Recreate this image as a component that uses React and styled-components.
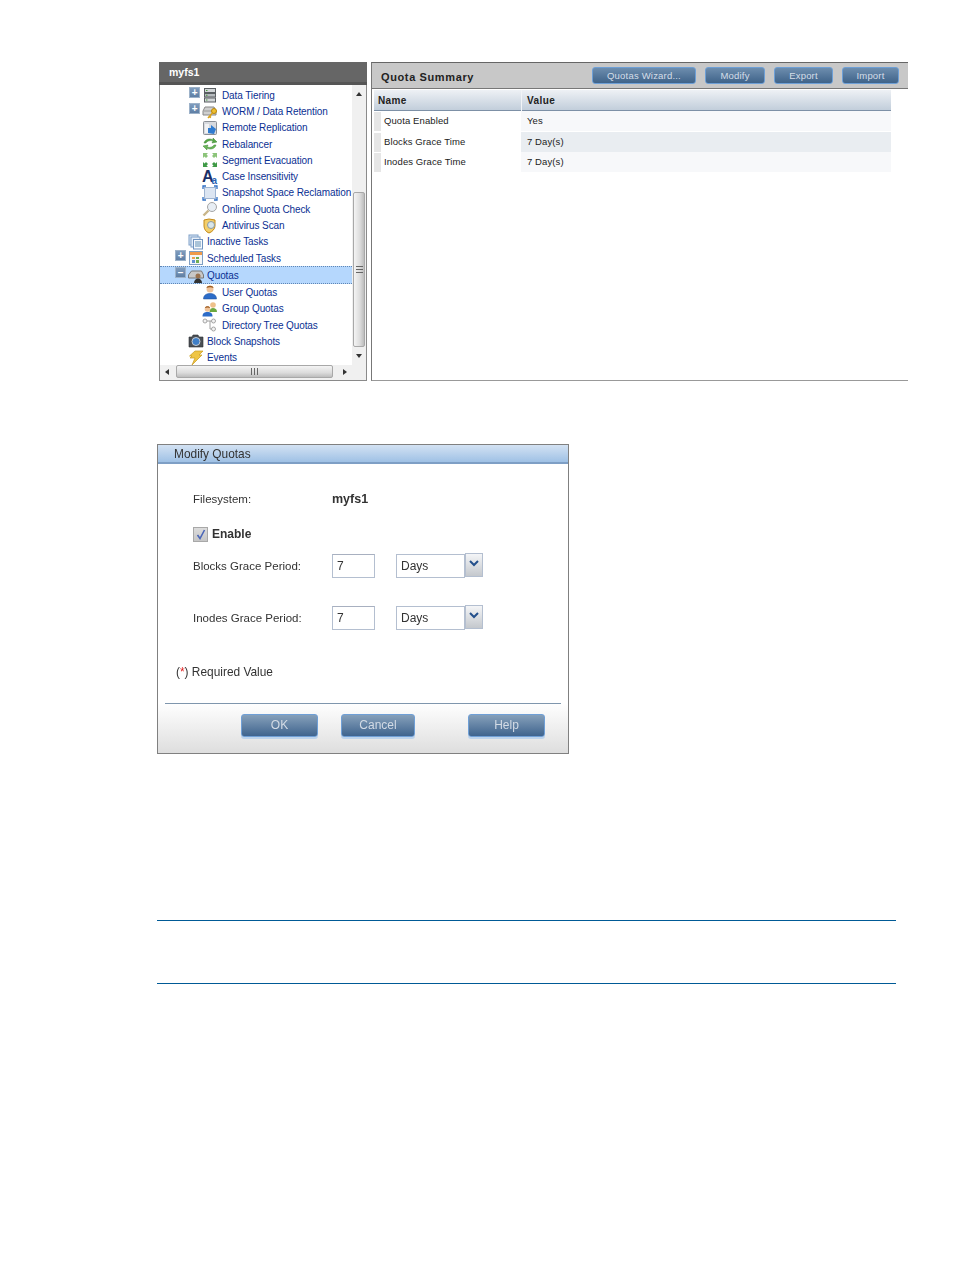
import React from 'react'
import styled, { createGlobalStyle } from 'styled-components'

const Global = createGlobalStyle`
  html, body { margin: 0; padding: 0; background: #fff; }
  body { font-family: "Liberation Sans", Arial, sans-serif; }
`

const Page = styled.div`
  width: 954px;
  height: 1270px;
  box-sizing: border-box;
  padding: 62px 0 0 157px;
  overflow: hidden;
`

const TopRow = styled.div`
  display: flex;
  gap: 4px;
  margin-left: 2px;
  height: 319px;
`

/* ---- tree ---- */
const TreePanel = styled.div`
  width: 208px;
  display: flex;
  flex-direction: column;
`
const TreeHeader = styled.div`
  height: 23px;
  box-sizing: border-box;
  background: #666;
  border-bottom: 3px solid #555;
  padding: 4px 0 0 10px;
  color: #fff;
  font-size: 10.5px;
  font-weight: bold;
  line-height: 13px;
`
const TreeBody = styled.div`
  flex: 1;
  display: grid;
  grid-template-columns: 1fr 14px;
  grid-template-rows: 280px 1fr;
  border: 1px solid #8a8a8a;
  border-top: none;
  background: #fff;
`
const TreeList = styled.div`
  padding-top: 2px;
  overflow: hidden;
`
const Row = styled.div`
  display: flex;
  align-items: center;
  box-sizing: border-box;
  height: ${p => (p.$selected ? '18px' : '16.3px')};
  padding-left: ${p => (p.$level === 2 ? 28 : 14)}px;
  color: #0a2f92;
  font-size: 10px;
  letter-spacing: -0.1px;
  white-space: nowrap;
  ${p => p.$selected && `
    background: #b5d7fd;
    border-top: 1px dotted #5f86b5;
    border-bottom: 1px dotted #5f86b5;
  `}
`
const ExpanderSlot = styled.span`
  width: 14px;
  height: 100%;
  flex: none;
  display: flex;
  align-items: center;
`
const Expander = styled.span`
  display: flex;
  align-items: center;
  justify-content: center;
  width: 9px;
  height: 9px;
  margin-left: 1px;
  background: linear-gradient(#7f9cbd, #5f7fa5);
  border: 1px solid #9db2c9;
  box-sizing: content-box;
  color: #fff;
  font-size: 10px;
  font-weight: bold;
  line-height: 9px;
  transform: translateY(-3px);
`
const Glyph = styled.svg`
  width: 16px;
  height: 16px;
  flex: none;
  overflow: visible;
  margin-right: ${p => (p.$level === 2 ? 4 : 3)}px;
`

const VScroll = styled.div`
  position: relative;
  background: #f0f0f0;
  display: flex;
  flex-direction: column;
  align-items: center;
  padding-top: 107px;
`
const VThumb = styled.div`
  width: 12px;
  height: 155px;
  box-sizing: border-box;
  background: linear-gradient(90deg, #f4f4f4, #dcdcdc 60%, #bdbdbd);
  border: 1px solid #a8a8a8;
  border-radius: 2px;
  display: flex;
  align-items: center;
  justify-content: center;
  color: #666;
`
const Arrow = styled.span`
  position: absolute;
  width: 0;
  height: 0;
  ${p => p.$dir === 'up' && `top: 7px; left: 4px; border: 3px solid transparent; border-top: 0; border-bottom: 4px solid #333;`}
  ${p => p.$dir === 'down' && `bottom: 7px; left: 4px; border: 3px solid transparent; border-bottom: 0; border-top: 4px solid #333;`}
  ${p => p.$dir === 'left' && `top: 4px; left: 5px; border: 3px solid transparent; border-left: 0; border-right: 4px solid #333;`}
  ${p => p.$dir === 'right' && `top: 4px; right: 5px; border: 3px solid transparent; border-right: 0; border-left: 4px solid #333;`}
`
const HScroll = styled.div`
  position: relative;
  background: #f0f0f0;
  padding: 0 19px 0 16px;
`
const HThumb = styled.div`
  height: 13px;
  box-sizing: border-box;
  background: linear-gradient(#f4f4f4, #dcdcdc 60%, #bdbdbd);
  border: 1px solid #a8a8a8;
  border-radius: 2px;
  display: flex;
  align-items: center;
  justify-content: center;
`
const Grip = styled.span`
  display: block;
  width: 7px;
  height: 7px;
  background: ${p => p.$vertical
    ? 'repeating-linear-gradient(#666 0 1px, transparent 1px 3px)'
    : 'repeating-linear-gradient(90deg, #666 0 1px, transparent 1px 3px)'};
`
const Corner = styled.div`
  background: #f0f0f0;
`

/* ---- summary ---- */
const SummaryPanel = styled.div`
  width: 537px;
  box-sizing: border-box;
  height: 319px;
  border-left: 1px solid #777;
  border-top: 1px solid #666;
  border-bottom: 1px solid #999;
`
const SummaryBar = styled.div`
  height: 26px;
  box-sizing: border-box;
  background: #c8c8c8;
  border-bottom: 1px solid #777;
  display: flex;
  align-items: center;
  padding: 0 9px 1px 9px;
`
const SummaryTitle = styled.div`
  flex: 1;
  font-size: 11px;
  font-weight: bold;
  letter-spacing: 0.62px;
  color: #222;
  padding-top: 3px;
`
const BarButton = styled.button`
  width: ${p => p.$w}px;
  margin-left: ${p => p.$gap}px;
  height: 17px;
  padding: 0;
  background: linear-gradient(#6d8dae, #3f6389);
  border: 1px solid #6d9fd6;
  border-radius: 3px;
  color: #d5dee8;
  font-family: inherit;
  font-size: 9.5px;
  letter-spacing: 0.2px;
`
const SummaryTable = styled.div`
  width: 517px;
  margin: 1px 0 0 2px;
`
const HeadRow = styled.div`
  display: grid;
  grid-template-columns: 147px 1fr;
  height: 21px;
  box-sizing: border-box;
  border-bottom: 1px solid #7d90a6;
  background: linear-gradient(#eef1f5, #c2cedb);
`
const HeadCell = styled.div`
  padding-left: ${p => p.$pad}px;
  font-size: 10px;
  font-weight: bold;
  letter-spacing: 0.4px;
  line-height: 22px;
  color: #222;
  & + & { border-left: 1px solid #f2f4f7; }
`
const DataRow = styled.div`
  display: grid;
  grid-template-columns: 147px 1fr;
  height: 20.5px;
  box-sizing: border-box;
  border-bottom: 1px solid #fff;
  font-size: 9.5px;
  letter-spacing: 0.1px;
  line-height: 20px;
  color: #222;
`
const LabelCell = styled.div`
  padding-left: 3px;
  background: #fff;
  border-left: 7px solid #e6e6e6;
  margin-top: 1px;
  line-height: 18px;
`
const ValueCell = styled.div`
  padding-left: 6px;
  background: ${p => (p.$alt ? '#e9edf1' : '#f7f8fa')};
`

/* ---- dialog ---- */
const Dialog = styled.div`
  margin-top: 63px;
  width: 412px;
  height: 310px;
  box-sizing: border-box;
  border: 1px solid #808080;
  display: flex;
  flex-direction: column;
  filter: blur(0.3px);
`
const DialogTitle = styled.div`
  height: 19px;
  box-sizing: border-box;
  background: linear-gradient(#d3e2f3, #9fc1e5);
  border-bottom: 2px solid #7e9fc5;
  padding-left: 16px;
  color: #333;
  font-size: 11.9px;
  line-height: 19px;
`
const DialogBody = styled.div`
  flex: 1;
  padding-left: 35px;
  font-size: 12px;
  color: #333;
`
const FieldRow = styled.div`
  display: flex;
  align-items: center;
  margin-top: ${p => p.$top}px;
  height: ${p => p.$height || 16}px;
`
const FieldLabel = styled.div`
  width: 139px;
  flex: none;
  font-size: 11.5px;
`
const BoldText = styled.span`
  font-weight: bold;
  font-size: ${p => p.$size || 12.5}px;
  color: #333;
`
const CheckBox = styled.span`
  display: flex;
  align-items: center;
  justify-content: center;
  width: 13px;
  height: 13px;
  margin-right: 4px;
  background: linear-gradient(#dcdcdc, #c6c6c6);
  border: 1px solid #a8a8a8;
`
const TextBox = styled.div`
  width: 43px;
  height: 24px;
  box-sizing: border-box;
  border: 1px solid #b4bfd0;
  border-top-color: #a8b0c0;
  padding-left: 4px;
  line-height: 22px;
  background: #fff;
`
const SelectBox = styled.div`
  display: flex;
  margin-left: 21px;
  height: 24px;
`
const SelectValue = styled.div`
  width: 69px;
  box-sizing: border-box;
  border: 1px solid #b4bfd0;
  padding-left: 4px;
  line-height: 23px;
`
const SelectButton = styled.div`
  width: 18px;
  height: 24px;
  margin-top: -1px;
  box-sizing: border-box;
  background: linear-gradient(#f4f5f7, #c4c8cd);
  border: 1px solid #b4bfd0;
  display: flex;
  justify-content: center;
  padding-top: 6px;
`
const RequiredNote = styled.div`
  margin: 34px 0 0 -17px;
  height: 16px;
  font-size: 11.9px;
  line-height: 16px;
  color: #333;
`
const Star = styled.span`
  color: #e02020;
`
const DialogFooter = styled.div`
  height: 50px;
  box-sizing: border-box;
  margin: 0 7px;
  border-top: 1px solid #7f96ad;
  padding-top: 10px;
  display: flex;
`
const FooterFill = styled.div`
  background: linear-gradient(#fff, #dedede);
`
const DialogButton = styled.button`
  width: ${p => p.$w}px;
  margin-left: ${p => p.$gap}px;
  height: 23px;
  padding: 0 0 2px;
  background: linear-gradient(#86a0ba, #3f648e);
  border: 1px solid #6f9fd6;
  border-radius: 3px;
  box-shadow: 0 2px 0 #bcd3ec;
  color: #d3dbe5;
  font-family: inherit;
  font-size: 12px;
`

const Note = styled.div`
  margin-top: 166px;
  width: 739px;
  height: 64px;
  box-sizing: border-box;
  border-top: 1px solid #005a96;
  border-bottom: 1px solid #005a96;
`

/* ---- icons ---- */
const icons = {
  tiering: (
    <>
      <rect x="2.500" y="1.500" width="11" height="4" fill="#d2d6d8" stroke="#5a5f62" />
      <rect x="2.500" y="6.500" width="11" height="3.500" fill="#b5babd" stroke="#5a5f62" />
      <rect x="2.500" y="11" width="11" height="4" fill="#d2d6d8" stroke="#5a5f62" />
      <path d="M4 3.500h1.500M4 8.300h1.500M4 13h1.500" stroke="#4a9a3a" />
    </>
  ),
  worm: (
    <>
      <path d="M1 8l2-4h9l2 4v4H1z" fill="#cfcfcf" stroke="#888" />
      <path d="M2 8h11" stroke="#999" />
      <circle cx="12" cy="8" r="2.500" fill="#f0c030" stroke="#b8860b" />
      <path d="M10.500 10L6 15M7.500 13.500l1.500 1" stroke="#d9a21c" strokeWidth="1.600" fill="none" />
    </>
  ),
  remote: (
    <>
      <rect x="1.500" y="1.500" width="13" height="13" rx="1" fill="#d6d9de" stroke="#8a8f96" />
      <rect x="3" y="4" width="4" height="9" fill="#f1f2f4" />
      <path d="M6 13V8h3V5l5 4-2 5z" fill="#2f7bd0" />
    </>
  ),
  rebalance: (
    <>
      <path d="M2 7C3 3 8 2 11 4V2l4 4-5 1 1-2C8 4 5 5 4 7z" fill="#55a845" stroke="#3c8332" strokeWidth=".5" />
      <path d="M14 9c-1 4-6 5-9 3v2l-4-4 5-1-1 2c3 1 6 0 7-2z" fill="#6ab858" stroke="#3c8332" strokeWidth=".5" />
    </>
  ),
  segment: (
    <>
      <path d="M1 1h5L4.500 2.500 6 4 4 6 2.500 4.500 1 6z" fill="#8cc47a" />
      <path d="M15 1h-5l1.500 1.500L10 4l2 2 1.500-1.500L15 6z" fill="#8cc47a" />
      <path d="M1 15v-5l1.500 1.500L4 10l2 2-1.500 1.500L6 15z" fill="#3f9a46" />
      <path d="M15 15v-5l-1.500 1.500L12 10l-2 2 1.500 1.500L10 15z" fill="#3f9a46" />
    </>
  ),
  caseIcon: (
    <>
      <text x="0" y="12.500" fontFamily="Liberation Sans" fontWeight="bold" fontSize="16" fill="#1b2f66">A</text>
      <text x="9.500" y="15" fontFamily="Liberation Sans" fontWeight="bold" fontSize="10" fill="#2b62b0">a</text>
    </>
  ),
  snapshot: (
    <>
      <rect x="2.500" y="2.500" width="11" height="11" fill="#dbe5f2" stroke="#9fb5d2" />
      <path d="M1 4V1h3M12 1h3v3M1 12v3h3M12 15h3v-3" fill="none" stroke="#2f6fc4" strokeWidth="1.300" />
    </>
  ),
  check: (
    <>
      <circle cx="10" cy="6" r="4.500" fill="#e8eef4" stroke="#a5a5a5" />
      <path d="M6.500 9.500L1.500 14.500" stroke="#c8b68a" strokeWidth="2.400" />
    </>
  ),
  antivirus: (
    <>
      <path d="M2 2l5-1 6 1v6c0 3-3 6-6 7-3-1-5-4-5-7z" fill="#f3cf6b" stroke="#c48a18" />
      <circle cx="9" cy="7" r="3.500" fill="#d8e6ea" stroke="#8d9a9e" />
    </>
  ),
  inactive: (
    <>
      <rect x="1" y="1" width="9" height="10" fill="#dbe7f5" stroke="#7fa0c8" />
      <rect x="3" y="3" width="9" height="10" fill="#e6eef8" stroke="#7fa0c8" />
      <rect x="5.500" y="5.500" width="9" height="9.500" fill="#f5f8fc" stroke="#6f93c0" />
      <path d="M7 8h6M7 10h6M7 12h6" stroke="#5f8fb5" />
    </>
  ),
  scheduled: (
    <>
      <rect x="1.500" y="1.500" width="13" height="13" fill="#f4f6f8" stroke="#7f9fc4" />
      <rect x="2" y="2" width="12" height="3" fill="#ef9a4a" />
      <rect x="4" y="7" width="3" height="2" fill="#f0a050" />
      <rect x="8" y="7" width="3" height="2" fill="#6fae52" />
      <rect x="4" y="10" width="3" height="3" fill="#5f8fd0" />
      <rect x="8" y="10" width="3" height="3" fill="#6fae52" />
    </>
  ),
  quotas: (
    <>
      <path d="M.5 8l3-4h10l2 4v3H.5z" fill="#c8c8c8" stroke="#777" />
      <circle cx="10" cy="9" r="2.500" fill="#9a7350" />
      <path d="M6 16c0-3 2-4.500 4-4.500s4 1.500 4 4.500z" fill="#333" />
    </>
  ),
  user: (
    <>
      <circle cx="8" cy="5" r="3.500" fill="#f0c39a" />
      <path d="M4.500 4c0-3 7-3 7 0-2-1-5-1-7 0z" fill="#9a5a20" />
      <path d="M1.500 15c0-4 3-5.500 6.500-5.500s6.500 1.500 6.500 5.500z" fill="#2d6cc8" stroke="#1e4f96" strokeWidth=".5" />
    </>
  ),
  group: (
    <>
      <circle cx="11" cy="4" r="2.800" fill="#eec08a" />
      <path d="M7.500 11c0-3 1.500-4 3.500-4s4 1 4 4z" fill="#6ca83f" />
      <circle cx="5.500" cy="8" r="2.800" fill="#f0c39a" />
      <path d="M3 7c0-2.500 5-2.500 5 0-1.500-.7-3.500-.7-5 0z" fill="#9a5a20" />
      <path d="M.5 15.500c0-3.500 2-4.500 5-4.500s5 1 5 4.500z" fill="#2d6cc8" />
    </>
  ),
  dirtree: (
    <>
      <path d="M4 4h6M8 4v8h2" fill="none" stroke="#a0a0a0" />
      <circle cx="3" cy="4" r="2" fill="#f2f2f2" stroke="#a5a5a5" />
      <circle cx="11.500" cy="4" r="2" fill="#f2f2f2" stroke="#a5a5a5" />
      <circle cx="11.500" cy="12" r="2" fill="#f2f2f2" stroke="#a5a5a5" />
    </>
  ),
  camera: (
    <>
      <path d="M1 4h3l1-2h5l1 2h4v10H1z" fill="#4a4f55" stroke="#2c2f33" strokeWidth=".6" />
      <circle cx="8" cy="8.500" r="4" fill="#3f7fc8" stroke="#c5cbd2" />
    </>
  ),
  events: (
    <path d="M7 1h8l-4 4h3L4 15l3-7H2l2-2H1.500z" fill="#efc545" stroke="#c99b1e" strokeWidth=".7" />
  ),
}

const treeItems = [
  { label: 'Data Tiering', icon: 'tiering', level: 2, mark: '+' },
  { label: 'WORM / Data Retention', icon: 'worm', level: 2, mark: '+' },
  { label: 'Remote Replication', icon: 'remote', level: 2 },
  { label: 'Rebalancer', icon: 'rebalance', level: 2 },
  { label: 'Segment Evacuation', icon: 'segment', level: 2 },
  { label: 'Case Insensitivity', icon: 'caseIcon', level: 2 },
  { label: 'Snapshot Space Reclamation', icon: 'snapshot', level: 2 },
  { label: 'Online Quota Check', icon: 'check', level: 2 },
  { label: 'Antivirus Scan', icon: 'antivirus', level: 2 },
  { label: 'Inactive Tasks', icon: 'inactive', level: 1 },
  { label: 'Scheduled Tasks', icon: 'scheduled', level: 1, mark: '+' },
  { label: 'Quotas', icon: 'quotas', level: 1, mark: '−', selected: true },
  { label: 'User Quotas', icon: 'user', level: 2 },
  { label: 'Group Quotas', icon: 'group', level: 2 },
  { label: 'Directory Tree Quotas', icon: 'dirtree', level: 2 },
  { label: 'Block Snapshots', icon: 'camera', level: 1 },
  { label: 'Events', icon: 'events', level: 1 },
]

const summaryRows = [
  { name: 'Quota Enabled', value: 'Yes' },
  { name: 'Blocks Grace Time', value: '7 Day(s)', alt: true },
  { name: 'Inodes Grace Time', value: '7 Day(s)' },
]

const GraceRow = ({ label, top }) => (
  <FieldRow $top={top} $height={24}>
    <FieldLabel>{label}</FieldLabel>
    <TextBox>7</TextBox>
    <SelectBox>
      <SelectValue>Days</SelectValue>
      <SelectButton>
        <svg width="10" height="7" viewBox="0 0 10 7">
          <path d="M1 1l4 4 4-4" fill="none" stroke="#24508c" strokeWidth="2" />
        </svg>
      </SelectButton>
    </SelectBox>
  </FieldRow>
)

export default function App() {
  return (
    <Page>
      <Global />
      <TopRow>
        <TreePanel>
          <TreeHeader>myfs1</TreeHeader>
          <TreeBody>
            <TreeList>
              {treeItems.map(item => (
                <Row key={item.label} $level={item.level} $selected={item.selected}>
                  <ExpanderSlot>
                    {item.mark && <Expander>{item.mark}</Expander>}
                  </ExpanderSlot>
                  <Glyph viewBox="0 0 16 16" $level={item.level}>{icons[item.icon]}</Glyph>
                  {item.label}
                </Row>
              ))}
            </TreeList>
            <VScroll>
              <Arrow $dir="up" />
              <VThumb><Grip $vertical /></VThumb>
              <Arrow $dir="down" />
            </VScroll>
            <HScroll>
              <Arrow $dir="left" />
              <HThumb><Grip /></HThumb>
              <Arrow $dir="right" />
            </HScroll>
            <Corner />
          </TreeBody>
        </TreePanel>
        <SummaryPanel>
          <SummaryBar>
            <SummaryTitle>Quota Summary</SummaryTitle>
            <BarButton $w={104} $gap={0}>Quotas Wizard...</BarButton>
            <BarButton $w={60} $gap={9}>Modify</BarButton>
            <BarButton $w={59} $gap={9}>Export</BarButton>
            <BarButton $w={57} $gap={9}>Import</BarButton>
          </SummaryBar>
          <SummaryTable>
            <HeadRow>
              <HeadCell $pad={4}>Name</HeadCell>
              <HeadCell $pad={5}>Value</HeadCell>
            </HeadRow>
            {summaryRows.map(row => (
              <DataRow key={row.name}>
                <LabelCell>{row.name}</LabelCell>
                <ValueCell $alt={row.alt}>{row.value}</ValueCell>
              </DataRow>
            ))}
          </SummaryTable>
        </SummaryPanel>
      </TopRow>

      <Dialog>
        <DialogTitle>Modify Quotas</DialogTitle>
        <DialogBody>
          <FieldRow $top={27}>
            <FieldLabel>Filesystem:</FieldLabel>
            <BoldText>myfs1</BoldText>
          </FieldRow>
          <FieldRow $top={19}>
            <CheckBox>
              <svg width="10" height="11" viewBox="0 0 10 11">
                <path d="M1.500 6l2.500 3.500L8.500 1" fill="none" stroke="#4a66b8" strokeWidth="1.600" />
              </svg>
            </CheckBox>
            <BoldText $size={12}>Enable</BoldText>
          </FieldRow>
          <GraceRow label="Blocks Grace Period:" top={12} />
          <GraceRow label="Inodes Grace Period:" top={28} />
          <RequiredNote>(<Star>*</Star>) Required Value</RequiredNote>
        </DialogBody>
        <FooterFill>
          <DialogFooter>
            <DialogButton $w={77} $gap={76}>OK</DialogButton>
            <DialogButton $w={74} $gap={23}>Cancel</DialogButton>
            <DialogButton $w={77} $gap={53}>Help</DialogButton>
          </DialogFooter>
        </FooterFill>
      </Dialog>

      <Note />
    </Page>
  )
}
